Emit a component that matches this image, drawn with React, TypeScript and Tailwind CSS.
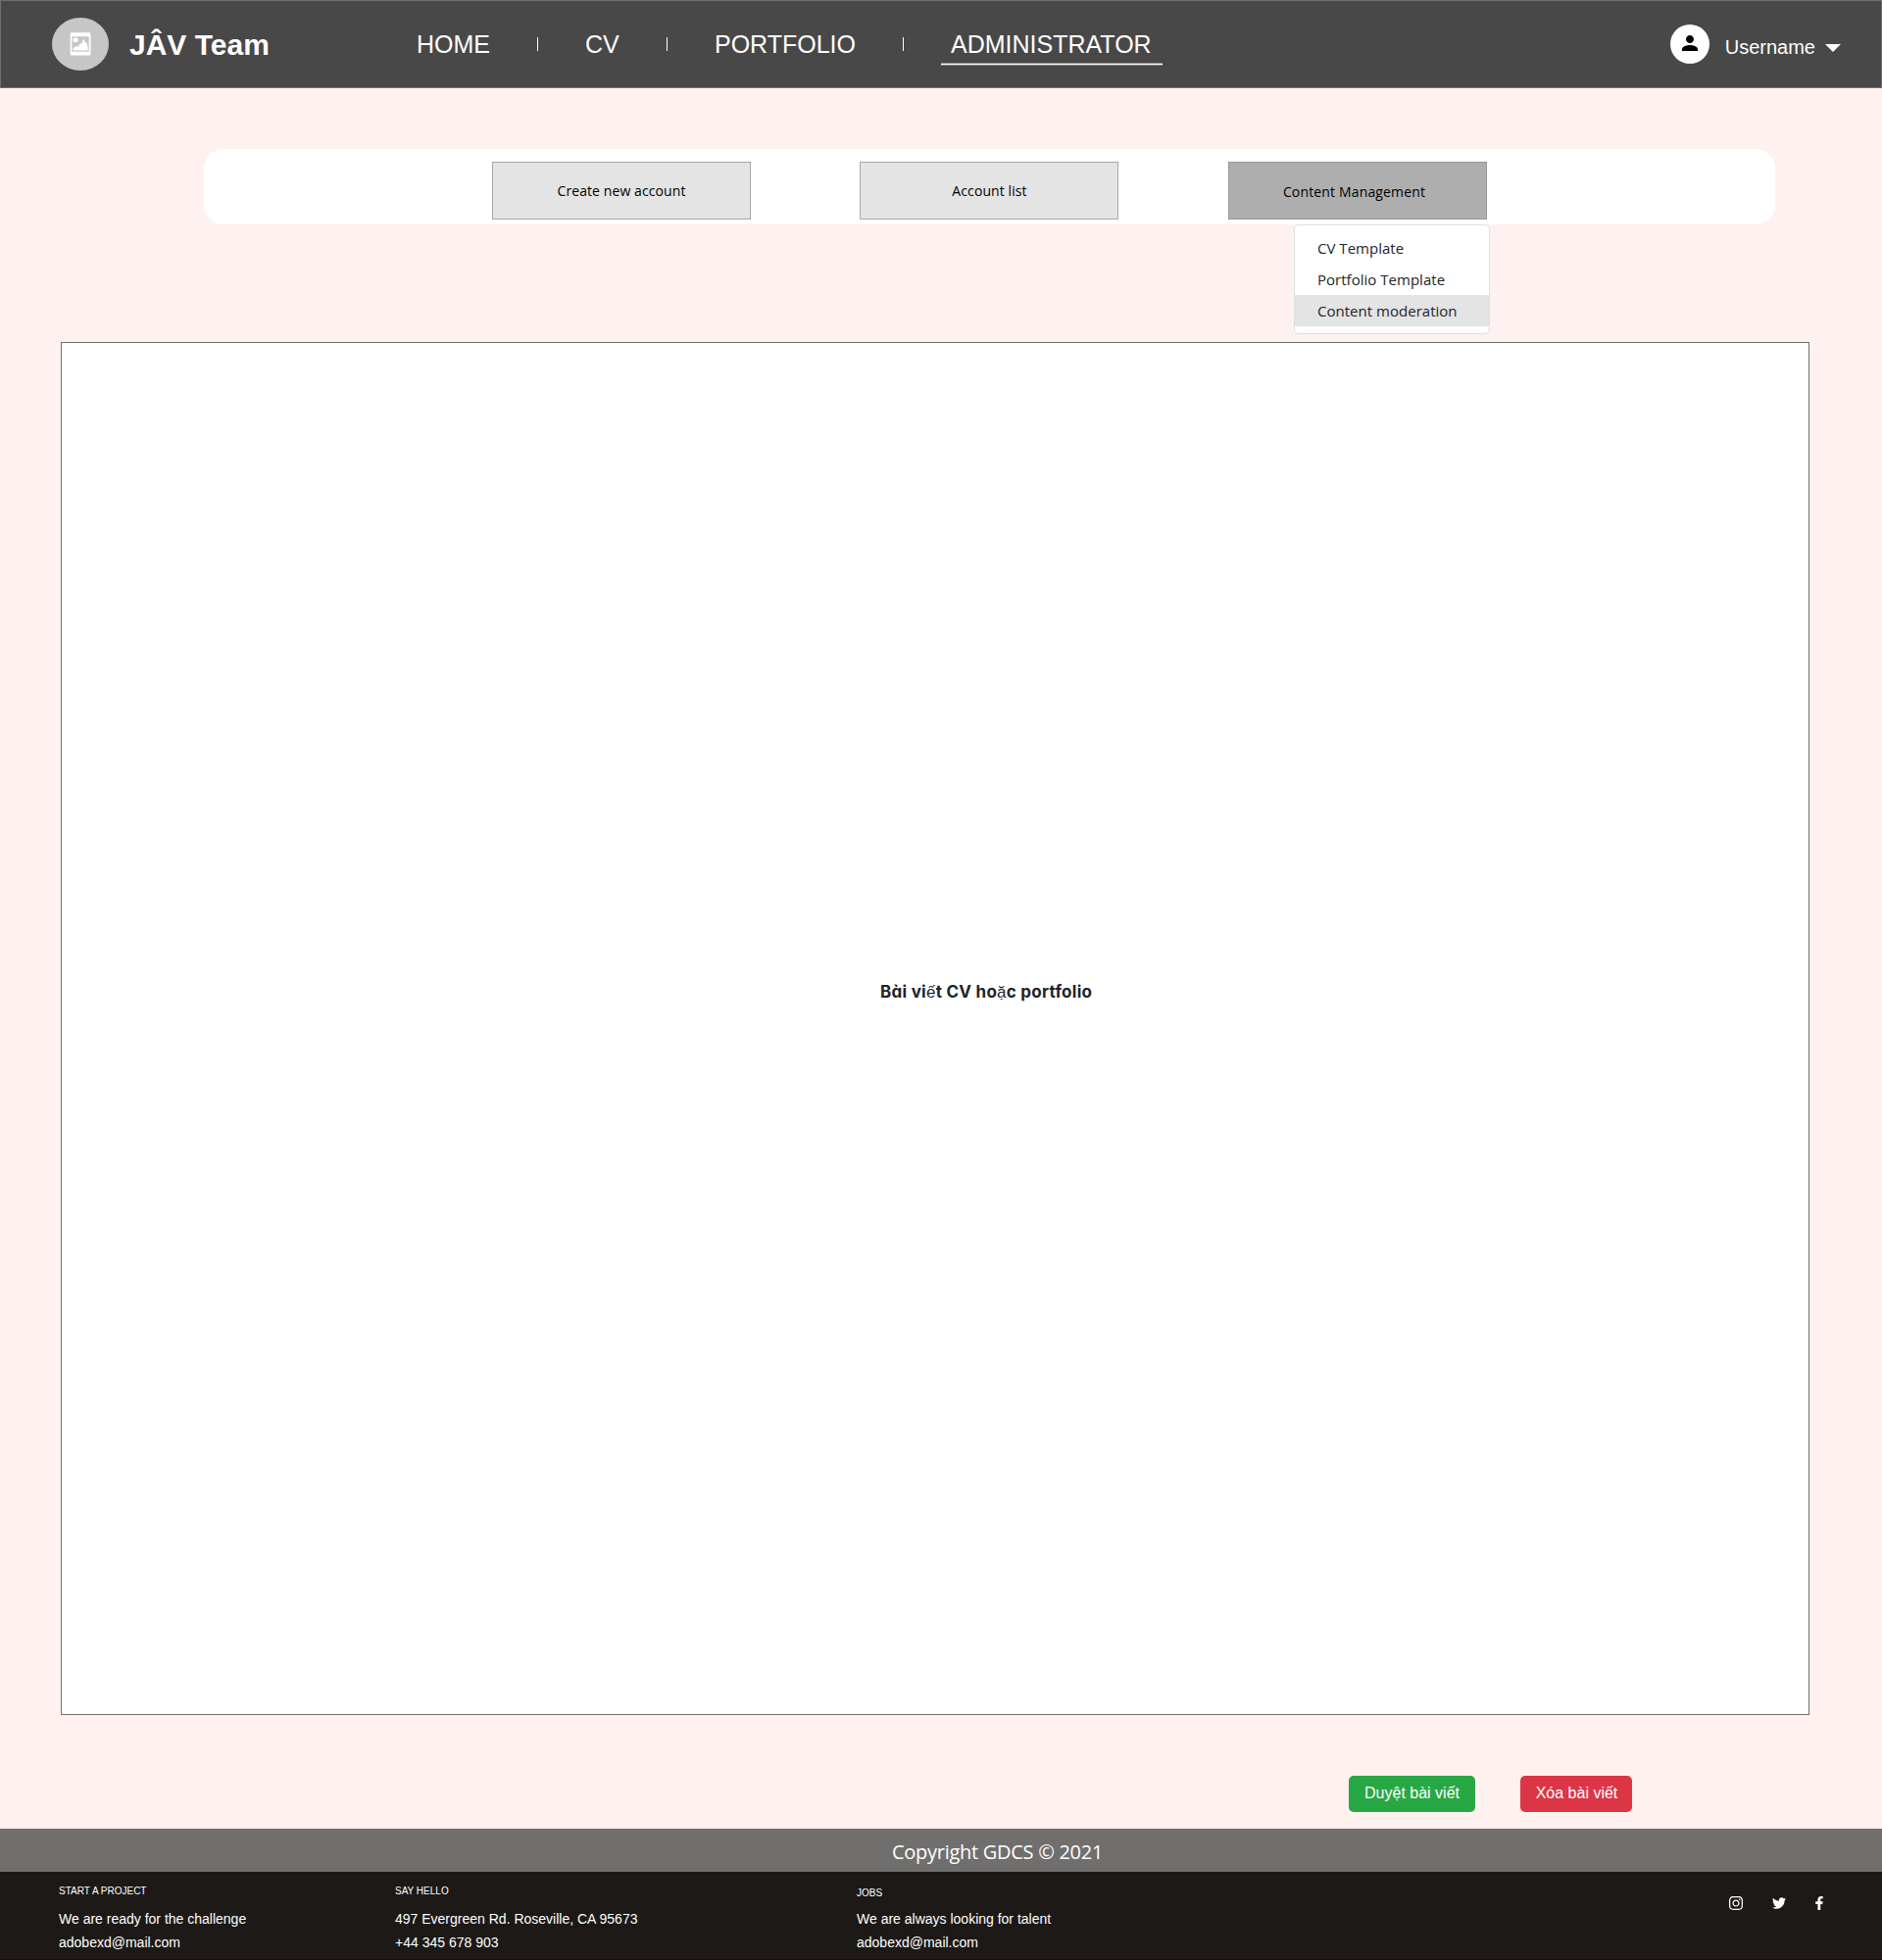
import { MdPerson } from 'react-icons/md';
import { FaFacebookF, FaInstagram, FaTwitter } from 'react-icons/fa';

const menuItems = [
  { label: 'CV Template', active: false },
  { label: 'Portfolio Template', active: false },
  { label: 'Content moderation', active: true },
];

function Separator() {
  return <span className="h-3.5 w-px bg-white" />;
}

function LogoMark() {
  return (
    <div className="flex h-[54px] w-[58px] items-center justify-center rounded-[50%] bg-[#c6c6c6]">
      <svg width="22" height="24" viewBox="0 0 22 24">
        <path
          fill="#fff"
          fillRule="evenodd"
          d="M2 .3h18.2c.8 0 1.3.5 1.3 1.3v20.6c0 .8-.5 1.3-1.3 1.3H2c-.8 0-1.3-.5-1.3-1.3V1.6C.7.8 1.2.3 2 .3zM2.3 4.2v15.6h17.4V4.2z"
        />
        <circle cx="6.1" cy="7.8" r="2.5" fill="#fff" />
        <path d="M3.6 18.6v-2.4l2.6-2 2.6.4 2.2-3.4 1.6.4 1.6-5.2 1.6 4 1.2-.6 1.6 5v3.8z" fill="#fff" />
      </svg>
    </div>
  );
}

function Header() {
  return (
    <header className="flex h-[90px] items-center border border-[#707070] bg-[#484848] pl-[52px] text-white">
      <LogoMark />
      <span className="mt-px w-[313px] pl-[21px] text-[30px] leading-[44px] font-bold">JÂV Team</span>
      <nav className="flex items-center text-[25px] leading-8 whitespace-nowrap">
        <a className="w-[124px] pl-px">HOME</a>
        <Separator />
        <a className="w-[131px] pl-12">CV</a>
        <Separator />
        <a className="w-[240px] pl-12">PORTFOLIO</a>
        <Separator />
        <a className="relative ml-[38px] w-[226px] pl-[10px]">
          ADMINISTRATOR
          <span className="absolute top-[35px] left-0 h-[3px] w-[226px] border-y border-[#8c8380] bg-white" />
        </a>
      </nav>
      <div className="ml-auto flex items-center pr-[41px]">
        <span className="flex h-10 w-10 items-center justify-center rounded-full bg-white">
          <MdPerson className="mb-0.5 h-6 w-6 text-black" />
        </span>
        <span className="mt-[5px] ml-4 text-xl">Username</span>
        <svg className="mt-2 ml-2.5" width="16" height="8" viewBox="0 0 16 8">
          <path d="M0 0h16l-8 8z" fill="#fff" />
        </svg>
      </div>
    </header>
  );
}

function Tabs() {
  return (
    <div className="ml-52 flex h-[77px] w-[1603px] rounded-[20px] bg-white pt-[13px] pl-[294px] font-['Open_Sans',sans-serif] text-sm tracking-[0.09px] text-black">
      <button className="mr-[111px] h-[59px] w-[264px] border border-[#a8a8a8] bg-[#e4e4e4]">
        Create new account
      </button>
      <button className="mr-28 h-[59px] w-[264px] border border-[#a8a8a8] bg-[#e4e4e4] pl-px">
        Account list
      </button>
      <div className="relative">
        <button className="h-[59px] w-[264px] border border-[#979797] bg-[#aeaeae] pt-0.5 pr-[7px] tracking-[0.15px]">
          Content Management
        </button>
        <ul className="absolute top-16 left-[67px] h-[112px] w-[200px] rounded-[5px] border border-[#dee0e2] bg-white pt-[7px] text-[15px] tracking-[0.02px] text-[#212529]">
          {menuItems.map((item) => (
            <li
              key={item.label}
              className={
                item.active
                  ? 'h-8 bg-[#e4e4e4] pl-[23px] leading-8'
                  : 'h-8 pl-[23px] leading-8'
              }
            >
              {item.label}
            </li>
          ))}
        </ul>
      </div>
    </div>
  );
}

function PostPreview() {
  return (
    <section className="mt-[120px] ml-[62px] h-[1401px] w-[1784px] border border-[#707070] bg-white pt-[648px] pl-[835px]">
      <p className="font-['Inter',sans-serif] text-[17px] leading-7 font-bold tracking-[0.26px] whitespace-nowrap text-[#212429] [font-feature-settings:'cv11']">
        Bài vi<span className="font-['Liberation_Sans',sans-serif] font-normal">ế</span>t CV ho
        <span className="font-['Liberation_Sans',sans-serif] font-normal">ặ</span>c portfolio
      </p>
    </section>
  );
}

function Footer() {
  return (
    <footer className="text-white">
      <div className="h-11 bg-[#706f6d] pt-[3px] pl-[910px] font-['Open_Sans',sans-serif] text-xl leading-[41px] tracking-[-0.28px]">
        Copyright GDCS © 2021
      </div>
      <div className="flex h-[90px] border-b border-[#150d10] bg-[#1d1917] pt-3.5 pl-[60px] text-sm leading-6">
        <div className="w-[343px]">
          <h3 className="mb-2.5 text-[10px] leading-3">START A PROJECT</h3>
          <p>We are ready for the challenge</p>
          <p>adobexd@mail.com</p>
        </div>
        <div className="w-[471px]">
          <h3 className="mb-2.5 text-[10px] leading-3">SAY HELLO</h3>
          <p>497 Evergreen Rd. Roseville, CA 95673</p>
          <p>+44 345 678 903</p>
        </div>
        <div>
          <h3 className="mb-2 pt-0.5 text-[10px] leading-3">JOBS</h3>
          <p>We are always looking for talent</p>
          <p>adobexd@mail.com</p>
        </div>
        <div className="mt-[10px] mr-[57px] ml-auto flex h-4 items-center">
          <FaInstagram className="h-4 w-4" />
          <FaTwitter className="ml-[29px] h-3.5 w-3.5" />
          <FaFacebookF className="ml-[27px] h-3.5 w-3.5" />
        </div>
      </div>
    </footer>
  );
}

export default function App() {
  return (
    <div className="h-[2000px] w-[1920px] overflow-hidden bg-[#fff1f0] font-['Liberation_Sans',sans-serif]">
      <Header />
      <main className="h-[1776px] pt-[62px]">
        <Tabs />
        <PostPreview />
        <div className="mt-[62px] ml-[1376px] flex text-base text-white">
          <button className="mr-[46px] h-[37px] w-[129px] rounded-[5px] bg-[#28a745] pb-[2px]">
            Duyệt bài viết
          </button>
          <button className="h-[37px] w-[114px] rounded-[5px] bg-[#dc3545] pb-[2px] pl-px">
            Xóa bài viết
          </button>
        </div>
      </main>
      <Footer />
    </div>
  );
}
